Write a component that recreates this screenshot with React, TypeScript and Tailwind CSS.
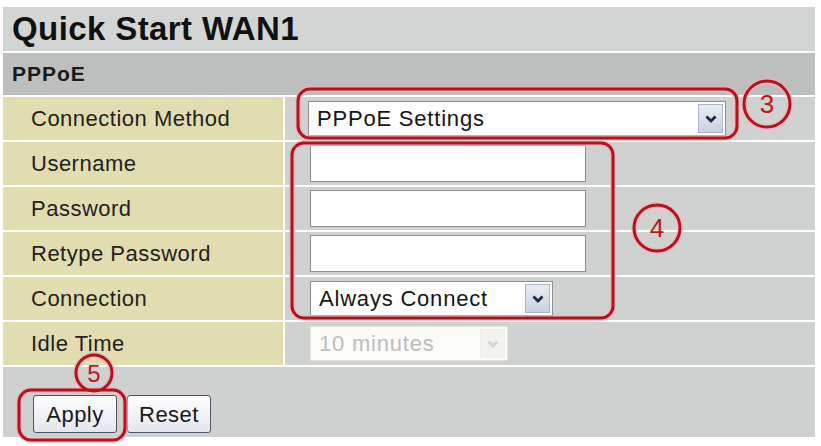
import React from "react";

const font = { fontFamily: '"Liberation Sans", Arial, sans-serif' };

const Chevron = ({ faded = false }: { faded?: boolean }) => (
  <svg width="12" height="8" viewBox="0 0 12 8">
    <path
      d="M1.5 1.5 L6 6 L10.5 1.5"
      fill="none"
      stroke={faded ? "#d8d8d0" : "#1d2a44"}
      strokeWidth="2.8"
    />
  </svg>
);

const SelectBox = ({
  value,
  width,
  disabled = false,
}: {
  value: string;
  width: string;
  disabled?: boolean;
}) => (
  <div
    className={`flex h-[35px] items-stretch border p-[2px] ${width} ${
      disabled ? "border-[#e2e2dc] bg-[#fbfbf8]" : "border-[#8e8e8e] bg-white"
    }`}
  >
    <div
      className={`flex flex-1 items-center pl-[6px] text-[22px] tracking-[0.8px] ${
        disabled ? "text-[#bdbdbd]" : "text-[#151515]"
      }`}
    >
      {value}
    </div>
    <div
      className={`flex w-[25px] items-center justify-center border ${
        disabled
          ? "border-[#eeeee8] bg-[#f2f2ee]"
          : "border-[#a9b3c4] bg-gradient-to-b from-[#e9edf4] to-[#c9d2e0]"
      }`}
    >
      <Chevron faded={disabled} />
    </div>
  </div>
);

const TextBox = () => (
  <div className="h-[37px] w-[276px] border border-[#8e8e8e] bg-white" />
);

const Row = ({ label, children }: { label: string; children: React.ReactNode }) => (
  <div className="flex h-[43px] gap-[2px]">
    <div className="flex w-[280px] items-center bg-[#e1ddb1] pl-[28px] text-[22px] tracking-[0.5px] text-[#222]">
      {label}
    </div>
    <div className="flex flex-1 items-center bg-[#d0d2d2] pl-[25px]">{children}</div>
  </div>
);

const Button = ({ label }: { label: string }) => (
  <div className="flex h-[38px] w-[84px] items-center justify-center rounded-[3px] border border-[#4a5566] bg-gradient-to-b from-white to-[#e4e6ee] text-[22px] tracking-[0.5px] text-[#1a1a1a]">
    {label}
  </div>
);

export default function App() {
  return (
    <div className="relative h-[446px] w-[821px] bg-white" style={font}>
      <div className="ml-[3px] flex w-[812px] flex-col gap-[2px] pt-[7px]">
        <div className="flex h-[44px] items-center bg-[#d3d5d5] pl-[9px] text-[33px] font-bold tracking-[0.4px] text-[#111]">
          Quick Start WAN1
        </div>
        <div className="flex h-[42px] items-center bg-[#bdbfbf] pl-[9px] text-[21px] font-bold tracking-[1px] text-[#1a1a1a]">
          PPPoE
        </div>
        <Row label="Connection Method">
          <SelectBox value="PPPoE Settings" width="w-[418px] -ml-[2px]" />
        </Row>
        <Row label="Username">
          <TextBox />
        </Row>
        <Row label="Password">
          <TextBox />
        </Row>
        <Row label="Retype Password">
          <TextBox />
        </Row>
        <Row label="Connection">
          <SelectBox value="Always Connect" width="w-[243px]" />
        </Row>
        <Row label="Idle Time">
          <SelectBox value="10 minutes" width="w-[198px]" disabled />
        </Row>
        <div className="flex h-[70px] items-end gap-[10px] bg-[#cfd1d1] pb-[4px] pl-[30px]">
          <Button label="Apply" />
          <Button label="Reset" />
        </div>
      </div>

      {/* red annotation marks drawn on top of the screenshot */}
      <svg
        className="pointer-events-none absolute left-0 top-0"
        width="821"
        height="446"
        viewBox="0 0 821 446"
      >
        <g fill="none" stroke="#f4b2b6" strokeWidth="6" opacity="0.7">
          <rect x="298" y="89" width="439" height="49" rx="12" />
          <rect x="292" y="143" width="321" height="175" rx="12" />
          <rect x="19" y="390" width="106" height="50" rx="12" />
          <circle cx="767" cy="104" r="23" />
          <circle cx="657" cy="228" r="23" />
          <circle cx="94" cy="373" r="18" />
        </g>
        <g fill="none" stroke="#b3121f" strokeWidth="3">
          <rect x="298" y="89" width="439" height="49" rx="12" />
          <rect x="292" y="143" width="321" height="175" rx="12" />
          <rect x="19" y="390" width="106" height="50" rx="12" />
          <circle cx="767" cy="104" r="23" />
          <circle cx="657" cy="228" r="23" />
          <circle cx="94" cy="373" r="18" />
        </g>
        <g
          fill="#c0141f"
          fontFamily='"Liberation Sans", Arial, sans-serif'
          textAnchor="middle"
        >
          <text x="767" y="113" fontSize="26">3</text>
          <text x="657" y="237" fontSize="26">4</text>
          <text x="94" y="382" fontSize="24">5</text>
        </g>
      </svg>
    </div>
  );
}
